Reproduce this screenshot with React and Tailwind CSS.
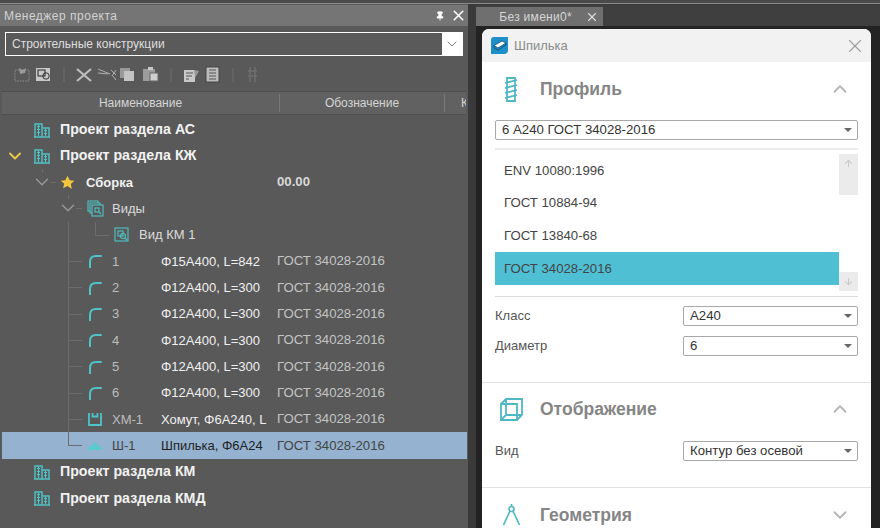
import React from 'react';
import { ChevronDown, ChevronUp, X, Pin, ArrowUp, ArrowDown } from 'lucide-react';

function Building() {
  return (
    <svg width="16" height="16" viewBox="0 0 16 16" fill="none" stroke="#4fc3c7" strokeWidth="1.4" className="shrink-0">
      <path d="M1 15V2h7v13M8 6h7v9M0 15h16" />
      <path d="M3 4.5h3M3 7.5h3M3 10.5h3M10 8.5h3M10 11.5h3M4.5 3v11M11.5 7v7" strokeWidth="1.2" />
    </svg>
  );
}

function Star() {
  return (
    <svg width="15" height="15" viewBox="0 0 24 24" fill="#f4c63d" className="shrink-0">
      <path d="M12 1l3.4 7.2 7.6 1-5.6 5.3 1.5 7.8L12 17.5l-6.9 3.8 1.5-7.8L1 9.2l7.6-1z" />
    </svg>
  );
}

function ViewsIcon() {
  return (
    <svg width="17" height="17" viewBox="0 0 17 17" fill="none" stroke="#4fc3c7" strokeWidth="1.1" className="shrink-0">
      <path d="M3 11H1V1h10v2" />
      <path d="M5 13H3V3h10v2" />
      <rect x="5" y="5" width="11" height="11" />
      <rect x="8" y="8" width="4" height="4" />
      <path d="M12 12l2 2" />
    </svg>
  );
}

function ViewIcon() {
  return (
    <svg width="15" height="15" viewBox="0 0 15 15" fill="none" stroke="#4fc3c7" strokeWidth="1.1" className="shrink-0">
      <rect x="1" y="1" width="13" height="13" />
      <rect x="4" y="4" width="5" height="5" />
      <circle cx="9" cy="9" r="2.5" />
      <path d="M11 11l2 2" />
    </svg>
  );
}

function BarIcon() {
  return (
    <svg width="14" height="14" viewBox="0 0 14 14" fill="none" stroke="#4fc3c7" strokeWidth="2" className="shrink-0">
      <path d="M2 13.5V8C2 4 4.5 2 8 2h5" strokeLinecap="round" />
    </svg>
  );
}

function ClampIcon() {
  return (
    <svg width="14" height="14" viewBox="0 0 14 14" fill="none" stroke="#4fc3c7" strokeWidth="1.8" className="shrink-0">
      <path d="M4.5 1v3.5h5V1M1 1v12h12V1" />
    </svg>
  );
}

function StudIcon() {
  return (
    <svg width="14" height="8" viewBox="0 0 14 8" fill="#5cc8cf" className="shrink-0">
      <path d="M0 8V4.5h3.5C4 2 5 1 7 1s3 1 3.5 3.5H14V8z" />
    </svg>
  );
}

// tree connectors lie over the row, so they are absolute inside it
function Row({ left, toggle, toggleLeft, icon, title, desc, code, codeClass, selected, lines }) {
  return (
    <div className="relative flex h-[26.33px] items-center">
      {selected && <div className="absolute inset-y-0 left-[2px] right-[1px] bg-[#95b2d0]" />}
      {lines}
      {toggle && (
        <ChevronDown
          size={22}
          strokeWidth={1.5}
          color={toggle}
          className="absolute top-[2px]"
          style={{ left: toggleLeft }}
        />
      )}
      <div className="absolute flex items-center" style={{ left }}>
        {icon}
      </div>
      {title}
      {desc && (
        <span className={`absolute left-[161px] whitespace-nowrap text-[13px] ${selected ? 'text-[#222]' : 'text-[#f0f0f0]'}`}>
          {desc}
        </span>
      )}
      {code && <span className={`absolute left-[277px] whitespace-nowrap text-[13.2px] ${codeClass || 'text-[#c4c4c4]'}`}>{code}</span>}
    </div>
  );
}

const H = ({ left, width, top = 13 }) => (
  <div className="absolute h-px bg-[#6c6c6c]" style={{ left, width, top }} />
);
const V = ({ left, top = 0, height = 27 }) => (
  <div className="absolute w-px bg-[#6c6c6c]" style={{ left, top, height }} />
);

function Section({ text, left }) {
  return (
    <div className="relative flex h-[26.33px] items-center">
      <div className="absolute left-[34px] flex items-center"><Building /></div>
      <span className="absolute left-[60px] whitespace-nowrap text-[14.2px] font-bold text-[#f2f2f2]">{text}</span>
      {left}
    </div>
  );
}

function ItemRow({ num, desc, icon = <BarIcon />, selected, last }) {
  return (
    <Row
      left={88}
      icon={icon}
      selected={selected}
      desc={desc}
      code="ГОСТ 34028-2016"
      codeClass={selected ? 'text-[#444]' : undefined}
      title={<span className={`absolute left-[112px] text-[13px] ${selected ? 'text-[#444]' : 'text-[#bdbdbd]'}`}>{num}</span>}
      lines={
        <>
          <V left={68} height={last ? 14 : 27} />
          <H left={68} width={14} />
        </>
      }
    />
  );
}

function Select({ text, className = '' }) {
  return (
    <div className={`flex h-[20px] items-center justify-between rounded-[2px] border border-[#a8a8a8] bg-white pl-[6px] pr-[5px] text-[13.2px] text-[#333] ${className}`}>
      <span>{text}</span>
      <span className="h-0 w-0 border-x-[4px] border-t-[4px] border-x-transparent border-t-[#666]" />
    </div>
  );
}

function ToolIcons() {
  return (
    <svg width="270" height="22" viewBox="0 0 270 22" fill="none" className="ml-[5px] mt-[2px] shrink-0">
      {/* new */}
      <rect x="10" y="6" width="14" height="11" stroke="#8a8a8a" strokeDasharray="1.5 1" />
      <path d="M14 4l4 2 3-2-1 5-5 1z" fill="#9a9a9a" />
      {/* window */}
      <rect x="31" y="4" width="14" height="13" fill="#c8c8c8" />
      <rect x="33" y="6" width="7" height="6" stroke="#222" />
      <circle cx="41" cy="12" r="3.2" stroke="#333" />
      <path d="M59 4v14" stroke="#6e6e6e" />
      {/* cut */}
      <path d="M72 5l14 12M86 5L72 17" stroke="#bdbdbd" strokeWidth="2.2" />
      {/* scissors-like */}
      <path d="M93 5l12 5M93 9l10 1M107 12l4-6M106 6l5 5M108 12l3 4" stroke="#b0b0b0" />
      {/* copy */}
      <rect x="115" y="4" width="10" height="10" fill="#999" />
      <rect x="119" y="7" width="10" height="10" fill="#c4c4c4" />
      {/* paste */}
      <rect x="138" y="5" width="12" height="12" fill="#9c9c9c" />
      <rect x="143" y="3" width="5" height="3" fill="#c8c8c8" />
      <rect x="145" y="9" width="8" height="8" fill="#d0d0d0" stroke="#666" />
      <path d="M166 4v14" stroke="#6e6e6e" />
      {/* properties */}
      <rect x="179" y="6" width="11" height="12" fill="#c9c9c9" />
      <path d="M181 9h7M181 12h6M181 15h3" stroke="#555" />
      <path d="M189 6l5 1-4 7z" fill="#999" />
      {/* list */}
      <rect x="201" y="3" width="13" height="15" fill="#bdbdbd" stroke="#444" />
      <path d="M204 6h7M204 9h7M204 12h7M204 15h7" stroke="#555" />
      <path d="M228 4v14" stroke="#6e6e6e" />
      {/* disabled */}
      <path d="M245 3v15M250 3v15M243 7h9M243 12h9" stroke="#6f6f6f" strokeWidth="1.5" />
    </svg>
  );
}

function PanelHead({ icon, text, up, className = '' }) {
  return (
    <div className={`flex items-center ${className}`}>
      <div className="flex w-[58px] justify-center">{icon}</div>
      <span className="flex-1 text-[17.5px] font-bold text-[#858585]">{text}</span>
      {up ? (
        <ChevronUp size={22} color="#b5b5b5" strokeWidth={2} className="mr-[20px]" />
      ) : (
        <ChevronDown size={22} color="#b5b5b5" strokeWidth={2} className="mr-[20px]" />
      )}
    </div>
  );
}

export default function App() {
  return (
    <div className="flex h-[528px] w-[880px] flex-col overflow-hidden bg-[#3a3a3a] font-['Liberation_Sans',Arial,sans-serif]">
      <div className="h-[4px] shrink-0 border-b border-[#8a8a8a] bg-[#4a4a4a]" />
      <div className="flex min-h-0 flex-1">
        {/* project manager */}
        <div className="flex w-[468px] shrink-0 flex-col bg-[#595959] pt-px">
          <div className="flex h-[21px] items-center justify-between bg-[#757575] pl-[4px] pr-[1px]">
            <span className="text-[12px] tracking-[0.5px] text-[#d2d2d2]">Менеджер проекта</span>
            <div className="flex items-center gap-[5px]">
              <Pin size={10} color="#fff" fill="#fff" />
              <X size={17} color="#fff" strokeWidth={2.2} />
            </div>
          </div>
          <div className="mx-[5px] mt-[6px] flex h-[24px] border border-white bg-[#5a5a5a]">
            <span className="flex flex-1 items-center pl-[6px] text-[12px] text-[#dedede]">Строительные конструкции</span>
            <div className="flex w-[20px] items-center justify-center bg-white">
              <ChevronDown size={16} color="#777" strokeWidth={1.5} />
            </div>
          </div>
          <div className="flex h-[35px] items-center">
            <ToolIcons />
          </div>
          <div className="mx-[2px] flex h-[24px] items-center overflow-hidden border-y border-[#4f4f4f] bg-[#616161] text-[12px] text-[#d5d5d5]">
            <div className="w-[278px] shrink-0 border-r border-[#787878] text-center">Наименование</div>
            <div className="w-[165px] shrink-0 border-r border-[#787878] text-center">Обозначение</div>
            <div className="pl-[16px]">К</div>
          </div>
          <div className="min-h-0 flex-1 pt-[1.5px]">
            <Section text="Проект раздела АС" />
            <Section
              text="Проект раздела КЖ"
              left={<ChevronDown size={20} color="#eec94a" strokeWidth={2.2} className="absolute left-[5px] top-[3px]" />}
            />
            <Row
              left={60}
              toggle="#9a9a9a"
              toggleLeft={31}
              icon={<Star />}
              lines={
                <>
                  <V left={42} height={4} />
                  <H left={50} width={6} />
                </>
              }
              title={<span className="absolute left-[86px] text-[13px] font-bold text-[#f0f0f0]">Сборка</span>}
              code="00.00"
              codeClass="font-bold text-[#d8d8d8]"
            />
            <Row
              left={87}
              toggle="#9a9a9a"
              toggleLeft={57}
              icon={<ViewsIcon />}
              lines={
                <>
                  <V left={68} height={4} />
                  <H left={76} width={6} />
                </>
              }
              title={<span className="absolute left-[112px] text-[13px] text-[#dcdcdc]">Виды</span>}
            />
            <Row
              left={114}
              icon={<ViewIcon />}
              lines={
                <>
                  <V left={68} />
                  <V left={95} height={14} />
                  <H left={95} width={14} />
                </>
              }
              title={<span className="absolute left-[139px] text-[13px] text-[#dcdcdc]">Вид КМ 1</span>}
            />
            <ItemRow num="1" desc="Φ15А400, L=842" />
            <ItemRow num="2" desc="Φ12А400, L=300" />
            <ItemRow num="3" desc="Φ12А400, L=300" />
            <ItemRow num="4" desc="Φ12А400, L=300" />
            <ItemRow num="5" desc="Φ12А400, L=300" />
            <ItemRow num="6" desc="Φ12А400, L=300" />
            <ItemRow num="ХМ-1" desc="Хомут, Φ6А240, L" icon={<ClampIcon />} />
            <ItemRow num="Ш-1" desc="Шпилька, Φ6А24" icon={<StudIcon />} selected last />
            <Section text="Проект раздела КМ" />
            <Section text="Проект раздела КМД" />
          </div>
        </div>

        {/* document area */}
        <div className="ml-[8px] flex min-w-0 flex-1 flex-col bg-[#3a3a3a] pt-px">
          <div className="flex h-[21px] shrink-0 items-end bg-[#3f3f3f]">
            <div className="flex h-[19px] w-[127px] items-center justify-end bg-[#6f6f6f] pr-[4px] text-[12px] tracking-[0.3px] text-[#d5d5d5]">
              <span className="mr-[13px]">Без имени0*</span>
              <X size={14} color="#dcdcdc" strokeWidth={2} />
            </div>
          </div>
          <div className="min-h-0 flex-1 bg-[#232323] pl-[6px] pr-[9px] pt-[3px]">
            <div className="flex h-[520px] flex-col rounded-t-[7px] bg-white">
              <div className="flex h-[33px] shrink-0 items-center justify-between rounded-t-[7px] bg-[#f2f2f2] pl-[9px] pr-[5px]">
                <div className="flex items-center gap-[6px]">
                  <svg width="17" height="17" viewBox="0 0 17 17">
                    <path d="M3 0h14v13a4 4 0 0 1-4 4H0V3a3 3 0 0 1 3-3z" fill="#1e8fc9" />
                    <path d="M3 8.5L11 4l4 2-8 5z" fill="#fff" stroke="#0c4a6a" strokeWidth="0.8" />
                    <path d="M3 8.5V11l4 2 8-5V6" fill="none" stroke="#0c4a6a" strokeWidth="0.8" />
                  </svg>
                  <span className="text-[13px] text-[#8b8b8b]">Шпилька</span>
                </div>
                <X size={22} color="#9d9d9d" strokeWidth={1.2} />
              </div>

              <PanelHead
                up
                className="mt-[10px] h-[34px]"
                icon={
                  <svg width="14" height="25" viewBox="0 0 14 25" fill="none" stroke="#4fb8c6" strokeWidth="1.8">
                    <path d="M3 1h8v23H3zM1 6l12-3M1 11l12-3M1 16l12-3M1 21l12-3" />
                  </svg>
                }
                text="Профиль"
              />
              <div className="mx-[13px] mt-[14px]">
                <Select text="6 А240 ГОСТ 34028-2016" />
                <div className="mt-[8px] h-[2px] bg-[#ececec]" />
                <div className="flex h-[146px] pt-[4px]">
                  <div className="flex flex-1 flex-col text-[13.2px] text-[#444]">
                    <div className="flex h-[33px] items-center pl-[9px]">ENV 10080:1996</div>
                    <div className="flex h-[32px] items-center pl-[9px]">ГОСТ 10884-94</div>
                    <div className="flex h-[33px] items-center pl-[9px]">ГОСТ 13840-68</div>
                    <div className="flex h-[33px] items-center bg-[#4fbfd4] pl-[9px]">ГОСТ 34028-2016</div>
                  </div>
                  <div className="flex w-[19px] flex-col justify-between bg-white pb-[5px]">
                    <div className="flex h-[41px] justify-center bg-[#ebebeb] pt-[4px]">
                      <ArrowUp size={11} color="#c8c8c8" strokeWidth={2.2} />
                    </div>
                    <div className="flex h-[19px] items-center justify-center bg-[#ebebeb]">
                      <ArrowDown size={11} color="#c8c8c8" strokeWidth={2.2} />
                    </div>
                  </div>
                </div>
                <div className="h-px bg-[#dcdcdc]" />
                <div className="mt-[9px] flex items-center justify-between text-[13px] text-[#555]">
                  <span>Класс</span>
                  <Select text="А240" className="w-[175px]" />
                </div>
                <div className="mt-[10px] flex items-center justify-between text-[13px] text-[#555]">
                  <span>Диаметр</span>
                  <Select text="6" className="w-[175px]" />
                </div>
              </div>

              <div className="mt-[26px] h-px shrink-0 bg-[#e2e2e2]" />
              <PanelHead
                up
                className="mt-[9px] h-[34px]"
                icon={
                  <svg width="23" height="23" viewBox="0 0 23 23" fill="none" stroke="#4fb8c6" strokeWidth="1.8">
                    <path d="M1 6h16v16H1zM1 6l5-5h16v16l-5 5M6 1v16h16M6 17l-5 5" />
                  </svg>
                }
                text="Отображение"
              />
              <div className="mx-[13px] mt-[15px] flex items-center justify-between text-[13px] text-[#555]">
                <span>Вид</span>
                <Select text="Контур без осевой" className="w-[175px]" />
              </div>
              <div className="mt-[26px] h-px shrink-0 bg-[#e2e2e2]" />
              <PanelHead
                className="mt-[10px] h-[34px]"
                icon={
                  <svg width="19" height="22" viewBox="0 0 19 22" fill="none" stroke="#4fb8c6" strokeWidth="1.7">
                    <circle cx="9.5" cy="5" r="2.5" />
                    <path d="M9.5 0V2.5M8 7L1.5 21M11 7l6.5 14" />
                  </svg>
                }
                text="Геометрия"
              />
            </div>
          </div>
        </div>
      </div>
    </div>
  );
}
